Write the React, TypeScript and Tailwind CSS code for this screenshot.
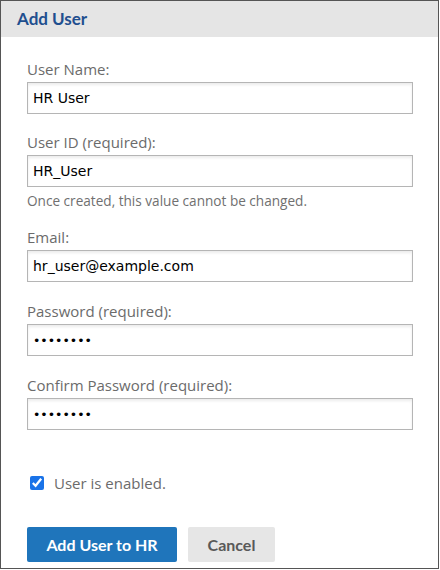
export default function App() {
  const label = 'block text-[15px] leading-5 text-[#6b6b6b] mb-[3px]';
  const input =
    'block w-[386px] h-8 border border-[#b5b5b5] bg-white px-[5px] text-black shadow-[inset_0_2px_3px_rgba(0,0,0,0.08)] outline-none font-["DejaVu_Sans",sans-serif]';

  return (
    <div className="w-[439px] h-[569px] border border-[#555] bg-white font-['Open_Sans',sans-serif] flex flex-col">
      {/* Header */}
      <div className="h-9 bg-[#e5e5e5] flex items-center px-4">
        <h1 className="font-['Lato',sans-serif] font-bold text-[17px] text-[#1f4f8f]">Add User</h1>
      </div>

      {/* Form */}
      <div className="px-[26px] pt-[22px]">
        <label className={label}>User Name:</label>
        <input className={`${input} text-[14px]`} defaultValue="HR User" />

        <label className={`${label} mt-[18px]`}>User ID (required):</label>
        <input className={`${input} text-[14px]`} defaultValue="HR_User" />
        <p className="mt-[5px] text-[13.6px] leading-[18px] text-[#707070]">
          Once created, this value cannot be changed.
        </p>

        <label className={`${label} mt-[17px]`}>Email:</label>
        <input className={`${input} text-[14px]`} defaultValue="hr_user@example.com" />

        <label className={`${label} mt-[19px]`}>Password (required):</label>
        <input type="password" className={`${input} text-[12.5px]`} defaultValue="12345678" />

        <label className={`${label} mt-[19px]`}>Confirm Password (required):</label>
        <input type="password" className={`${input} text-[12.5px]`} defaultValue="12345678" />

        <div className="mt-[43px] h-5 flex items-center pl-[3px]">
          <input type="checkbox" defaultChecked className="w-[14px] h-[14px] m-0 accent-[#1a73e8]" />
          <span className="ml-[10px] text-[15px] text-[#6b6b6b]">User is enabled.</span>
        </div>

        <div className="mt-[34px] flex gap-[11px]">
          <button className="w-[150px] h-[35px] rounded-[2px] bg-[#1f75bb] text-white font-['Lato',sans-serif] font-bold text-[16px]">
            Add User to HR
          </button>
          <button className="w-[87px] h-[35px] rounded-[2px] bg-[#e6e6e6] text-[#595959] font-['Lato',sans-serif] font-bold text-[16px]">
            Cancel
          </button>
        </div>
      </div>
    </div>
  );
}
